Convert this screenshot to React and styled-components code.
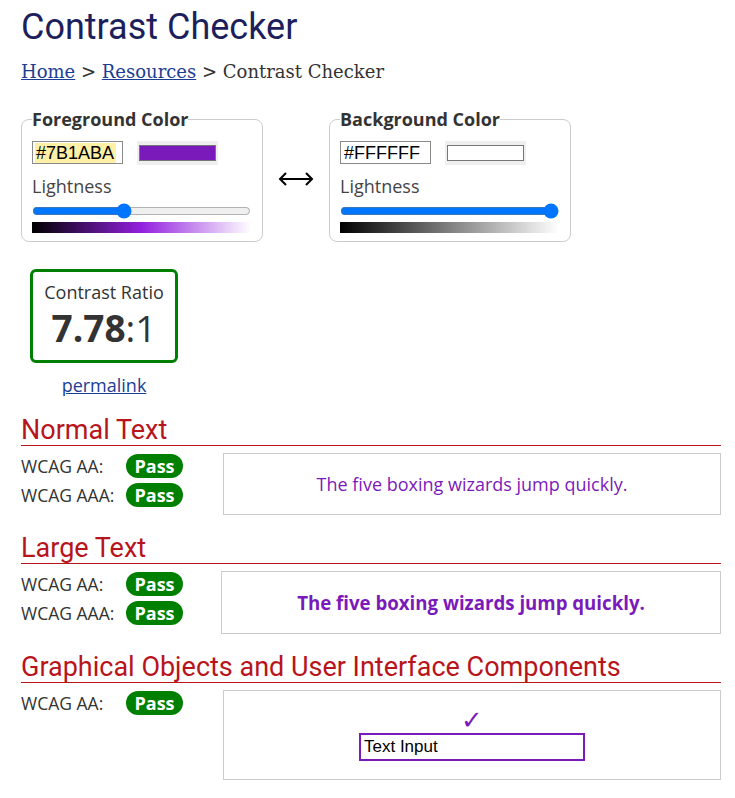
import styled, { createGlobalStyle } from "styled-components";

const Color = {
  Title: "#1d1f5c",
  Text: "#333333",
  Link: "#1c3d94",
  Red: "#b8141c",
  Green: "#008000",
  Purple: "#7B1ABA",
  Border: "#cccccc",
};

const GlobalStyle = createGlobalStyle`
  body {
    margin: 0;
    background: #ffffff;
    font-family: "Open Sans", sans-serif;
    font-size: 18px;
    color: ${Color.Text};
  }
`;

const App = () => {
  return (
    <Page>
      <GlobalStyle />
      <Title>Contrast Checker</Title>
      <Breadcrumb>
        <a href="#">Home</a> &gt; <a href="#">Resources</a> &gt; Contrast Checker
      </Breadcrumb>

      <ColorRow>
        <ColorPicker
          title="Foreground Color"
          hex="#7B1ABA"
          color="#7B1ABA"
          lightness={41.6}
          gradient="linear-gradient(to right, #000000, hsl(276, 75%, 50%), #ffffff)"
          highlight
        />
        <SwapArrow width="36" height="16" viewBox="0 0 36 16">
          <path
            d="M2 8 H34 M8 2 L2 8 L8 14 M28 2 L34 8 L28 14"
            fill="none"
            stroke="#000"
            strokeWidth="2"
          />
        </SwapArrow>
        <ColorPicker
          title="Background Color"
          hex="#FFFFFF"
          color="#FFFFFF"
          lightness={100}
          gradient="linear-gradient(to right, #000000, #ffffff)"
        />
      </ColorRow>

      <RatioColumn>
        <RatioBox>
          <RatioLabel>Contrast Ratio</RatioLabel>
          <RatioValue>
            <b>7.78</b>:1
          </RatioValue>
        </RatioBox>
        <Permalink href="#">permalink</Permalink>
      </RatioColumn>

      <Section title="Normal Text" results={["WCAG AA:", "WCAG AAA:"]} height={62}>
        <Sample>The five boxing wizards jump quickly.</Sample>
      </Section>

      <Section title="Large Text" results={["WCAG AA:", "WCAG AAA:"]} height={63} shift>
        <Sample large>The five boxing wizards jump quickly.</Sample>
      </Section>

      <Section
        title="Graphical Objects and User Interface Components"
        results={["WCAG AA:"]}
        height={90}
      >
        <Check>✓</Check>
        <DemoInput>Text Input</DemoInput>
      </Section>
    </Page>
  );
};

const ColorPicker = ({ title, hex, color, lightness, gradient, highlight }) => {
  return (
    <Fieldset>
      <Legend>{title}</Legend>
      <HexRow>
        <HexInput>
          <HexText highlight={highlight}>{hex}</HexText>
        </HexInput>
        <Swatch>
          <SwatchFill style={{ background: color }} />
        </Swatch>
      </HexRow>
      <FieldLabel>Lightness</FieldLabel>
      <Slider type="range" min="0" max="100" step="0.1" defaultValue={lightness} />
      <GradientBar style={{ background: gradient }} />
    </Fieldset>
  );
};

const Section = ({ title, results, height, shift, children }) => {
  return (
    <>
      <SectionTitle>{title}</SectionTitle>
      <SectionBody shift={shift}>
        <Results>
          {results.map((r) => (
            <ResultRow key={r}>
              <ResultLabel>{r}</ResultLabel>
              <PassBadge>Pass</PassBadge>
            </ResultRow>
          ))}
        </Results>
        <SampleBox height={height}>{children}</SampleBox>
      </SectionBody>
    </>
  );
};

const Page = styled.div`
  padding: 5px 14px 20px 21px;
  width: 700px;
`;

const Title = styled.h1`
  margin: 0;
  font-family: Roboto, sans-serif;
  font-weight: 400;
  font-size: 36px;
  line-height: 44px;
  color: ${Color.Title};
`;

const Breadcrumb = styled.div`
  margin-top: 11px;
  font-family: "DejaVu Serif", serif;
  font-size: 18px;
  line-height: 24px;
  color: ${Color.Text};

  a {
    color: ${Color.Link};
  }
`;

const ColorRow = styled.div`
  display: flex;
  align-items: center;
  margin-top: 23px;
`;

const SwapArrow = styled.svg`
  margin: 8px 15px 0 15px;
`;

const Fieldset = styled.fieldset`
  margin: 0;
  width: 242px;
  box-sizing: border-box;
  border: 1px solid ${Color.Border};
  border-radius: 8px;
  padding: 10px 10px 8px 10px;
`;

const Legend = styled.legend`
  padding: 0;
  font-weight: 700;
  font-size: 18px;
  line-height: 24px;
  color: ${Color.Text};
`;

const HexRow = styled.div`
  display: flex;
  align-items: flex-start;
  gap: 14px;
`;

const HexInput = styled.div`
  width: 91px;
  height: 23px;
  box-sizing: border-box;
  border: 1px solid #8a8a8a;
  padding: 1px 0 0 2px;
  font-family: "Liberation Sans", Arial, sans-serif;
  font-size: 18px;
  line-height: 20px;
  color: #000;
`;

const HexText = styled.span`
  display: inline-block;
  padding: 0 2px 0 1px;
  background: ${(props) => (props.highlight ? "#fff0a6" : "transparent")};
`;

const Swatch = styled.div`
  width: 81px;
  height: 24px;
  box-sizing: border-box;
  padding: 4px 2px;
  background: #efefef;
`;

const SwatchFill = styled.div`
  height: 100%;
  box-sizing: border-box;
  border: 1px solid #767676;
`;

const FieldLabel = styled.div`
  margin-top: 9px;
  font-size: 18px;
  line-height: 24px;
  color: #444;
`;

const Slider = styled.input`
  display: block;
  width: 219px;
  height: 16px;
  margin: 5px 0 0 0;
`;

const GradientBar = styled.div`
  margin-top: 3px;
  width: 219px;
  height: 11px;
`;

const RatioColumn = styled.div`
  display: flex;
  flex-direction: column;
  align-items: center;
  width: 148px;
  margin: 27px 0 0 9px;
`;

const RatioBox = styled.div`
  width: 148px;
  height: 94px;
  box-sizing: border-box;
  border: 3px solid ${Color.Green};
  border-radius: 6px;
  padding-top: 8px;
  text-align: center;
`;

const RatioLabel = styled.div`
  font-size: 18px;
  line-height: 24px;
  color: ${Color.Text};
`;

const RatioValue = styled.div`
  margin-top: 2px;
  font-size: 37px;
  line-height: 44px;
  color: ${Color.Text};

  b {
    font-weight: 700;
  }
`;

const Permalink = styled.a`
  margin-top: 10px;
  font-size: 18px;
  line-height: 24px;
  color: ${Color.Link};
`;

const SectionTitle = styled.h2`
  margin: 18px 0 0 0;
  font-family: Roboto, sans-serif;
  font-weight: 400;
  font-size: 27px;
  line-height: 30px;
  color: ${Color.Red};
  border-bottom: 1px solid ${Color.Red};
`;

const SectionBody = styled.div`
  display: grid;
  grid-template-columns: ${(props) => (props.shift ? "200px" : "202px")} 1fr;
  margin-top: 7px;
`;

const Results = styled.div`
  display: flex;
  flex-direction: column;
  gap: 5px;
  padding-top: 1px;
`;

const ResultRow = styled.div`
  display: flex;
  align-items: center;
`;

const ResultLabel = styled.div`
  width: 105px;
  font-size: 17.5px;
  line-height: 24px;
  color: ${Color.Text};
`;

const PassBadge = styled.div`
  width: 57px;
  height: 24px;
  border-radius: 12px;
  background: ${Color.Green};
  color: #fff;
  font-weight: 700;
  font-size: 18px;
  line-height: 24px;
  text-align: center;
`;

const SampleBox = styled.div`
  display: flex;
  flex-direction: column;
  align-items: center;
  justify-content: center;
  height: ${(props) => props.height}px;
  box-sizing: border-box;
  border: 1px solid ${Color.Border};
`;

const Sample = styled.div`
  color: ${Color.Purple};
  font-size: ${(props) => (props.large ? "18.67px" : "18px")};
  font-weight: ${(props) => (props.large ? 700 : 400)};
`;

const Check = styled.div`
  font-family: "DejaVu Sans", sans-serif;
  font-size: 26px;
  line-height: 22px;
  color: ${Color.Purple};
`;

const DemoInput = styled.div`
  margin-top: 2px;
  width: 226px;
  height: 28px;
  box-sizing: border-box;
  border: 2px solid ${Color.Purple};
  padding-left: 3px;
  font-family: "Liberation Sans", Arial, sans-serif;
  font-size: 17px;
  line-height: 24px;
  color: #000;
`;

export default App;
